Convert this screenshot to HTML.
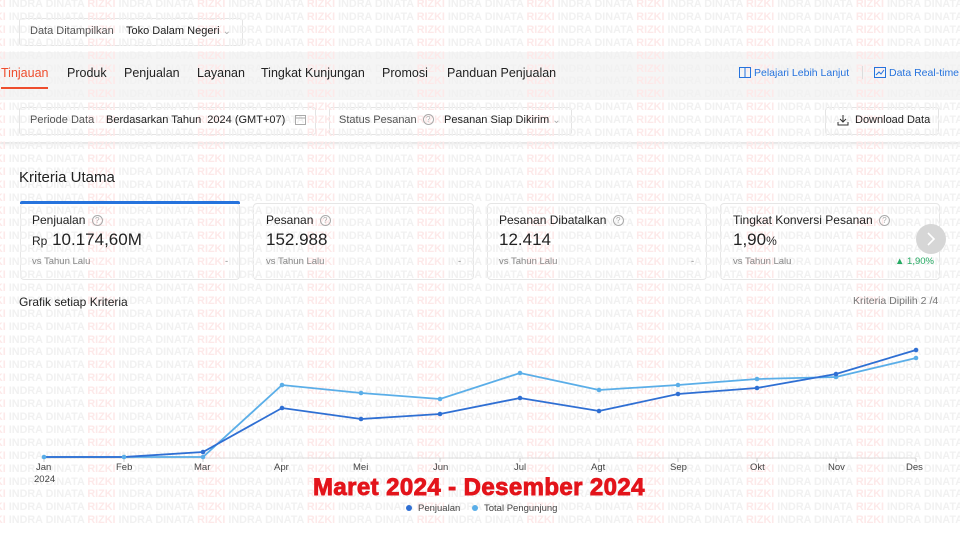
<!DOCTYPE html>
<html><head><meta charset="utf-8"><style>
*{margin:0;padding:0;box-sizing:border-box}
body{width:960px;height:533px;overflow:hidden;background:#fff;font-family:"Liberation Sans",sans-serif;position:relative;color:#222}
.band{position:absolute;left:0;top:52px;width:960px;height:92px;background:#f5f5f5}
.wmw{position:absolute;left:0;top:0;width:960px;height:533px;overflow:hidden;z-index:1;pointer-events:none}
.wm{position:absolute;left:-101px;top:-2px;width:1061px;overflow:hidden;font-weight:bold;font-size:10.8px;line-height:12.9px;color:#f1f1f1;white-space:nowrap}
.wm i{font-style:normal;color:#fde9e9}
.a{position:absolute;z-index:2}
.box{position:absolute;border:1px solid #e4e4e4;border-radius:3px;z-index:0}
.t{position:absolute;z-index:2;white-space:nowrap}
.g{color:#555}
.nav{font-size:12.5px;color:#222;top:66px}
.q{display:inline-block;width:11px;height:11px;border:1px solid #aaa;border-radius:50%;font-size:8px;line-height:9px;text-align:center;color:#aaa;vertical-align:1px;margin-left:3px}
.card{position:absolute;top:203px;height:77px;border:1px solid #e6e6e6;border-radius:4px;z-index:0}
.lbl{font-size:12px;color:#222}
.val{font-size:17px;color:#222}
.vs{font-size:9.5px;color:#888}
.m{font-size:9.5px;color:#444;top:462px}
</style></head><body>
<div class="band"></div>
<div style="position:absolute;left:0;top:100px;width:960px;height:42px;background:#fff;box-shadow:0 2px 4px rgba(0,0,0,.08)"></div>
<div class="wmw"><div class="wm">
<div>INDRA DINATA <i>RIZKI</i> INDRA DINATA <i>RIZKI</i> INDRA DINATA <i>RIZKI</i> INDRA DINATA <i>RIZKI</i> INDRA DINATA <i>RIZKI</i> INDRA DINATA <i>RIZKI</i> INDRA DINATA <i>RIZKI</i> INDRA DINATA <i>RIZKI</i> INDRA DINATA <i>RIZKI</i> INDRA DINATA <i>RIZKI</i></div>
<div>INDRA DINATA <i>RIZKI</i> INDRA DINATA <i>RIZKI</i> INDRA DINATA <i>RIZKI</i> INDRA DINATA <i>RIZKI</i> INDRA DINATA <i>RIZKI</i> INDRA DINATA <i>RIZKI</i> INDRA DINATA <i>RIZKI</i> INDRA DINATA <i>RIZKI</i> INDRA DINATA <i>RIZKI</i> INDRA DINATA <i>RIZKI</i></div>
<div>INDRA DINATA <i>RIZKI</i> INDRA DINATA <i>RIZKI</i> INDRA DINATA <i>RIZKI</i> INDRA DINATA <i>RIZKI</i> INDRA DINATA <i>RIZKI</i> INDRA DINATA <i>RIZKI</i> INDRA DINATA <i>RIZKI</i> INDRA DINATA <i>RIZKI</i> INDRA DINATA <i>RIZKI</i> INDRA DINATA <i>RIZKI</i></div>
<div>INDRA DINATA <i>RIZKI</i> INDRA DINATA <i>RIZKI</i> INDRA DINATA <i>RIZKI</i> INDRA DINATA <i>RIZKI</i> INDRA DINATA <i>RIZKI</i> INDRA DINATA <i>RIZKI</i> INDRA DINATA <i>RIZKI</i> INDRA DINATA <i>RIZKI</i> INDRA DINATA <i>RIZKI</i> INDRA DINATA <i>RIZKI</i></div>
<div>INDRA DINATA <i>RIZKI</i> INDRA DINATA <i>RIZKI</i> INDRA DINATA <i>RIZKI</i> INDRA DINATA <i>RIZKI</i> INDRA DINATA <i>RIZKI</i> INDRA DINATA <i>RIZKI</i> INDRA DINATA <i>RIZKI</i> INDRA DINATA <i>RIZKI</i> INDRA DINATA <i>RIZKI</i> INDRA DINATA <i>RIZKI</i></div>
<div>INDRA DINATA <i>RIZKI</i> INDRA DINATA <i>RIZKI</i> INDRA DINATA <i>RIZKI</i> INDRA DINATA <i>RIZKI</i> INDRA DINATA <i>RIZKI</i> INDRA DINATA <i>RIZKI</i> INDRA DINATA <i>RIZKI</i> INDRA DINATA <i>RIZKI</i> INDRA DINATA <i>RIZKI</i> INDRA DINATA <i>RIZKI</i></div>
<div>INDRA DINATA <i>RIZKI</i> INDRA DINATA <i>RIZKI</i> INDRA DINATA <i>RIZKI</i> INDRA DINATA <i>RIZKI</i> INDRA DINATA <i>RIZKI</i> INDRA DINATA <i>RIZKI</i> INDRA DINATA <i>RIZKI</i> INDRA DINATA <i>RIZKI</i> INDRA DINATA <i>RIZKI</i> INDRA DINATA <i>RIZKI</i></div>
<div>INDRA DINATA <i>RIZKI</i> INDRA DINATA <i>RIZKI</i> INDRA DINATA <i>RIZKI</i> INDRA DINATA <i>RIZKI</i> INDRA DINATA <i>RIZKI</i> INDRA DINATA <i>RIZKI</i> INDRA DINATA <i>RIZKI</i> INDRA DINATA <i>RIZKI</i> INDRA DINATA <i>RIZKI</i> INDRA DINATA <i>RIZKI</i></div>
<div>INDRA DINATA <i>RIZKI</i> INDRA DINATA <i>RIZKI</i> INDRA DINATA <i>RIZKI</i> INDRA DINATA <i>RIZKI</i> INDRA DINATA <i>RIZKI</i> INDRA DINATA <i>RIZKI</i> INDRA DINATA <i>RIZKI</i> INDRA DINATA <i>RIZKI</i> INDRA DINATA <i>RIZKI</i> INDRA DINATA <i>RIZKI</i></div>
<div>INDRA DINATA <i>RIZKI</i> INDRA DINATA <i>RIZKI</i> INDRA DINATA <i>RIZKI</i> INDRA DINATA <i>RIZKI</i> INDRA DINATA <i>RIZKI</i> INDRA DINATA <i>RIZKI</i> INDRA DINATA <i>RIZKI</i> INDRA DINATA <i>RIZKI</i> INDRA DINATA <i>RIZKI</i> INDRA DINATA <i>RIZKI</i></div>
<div>INDRA DINATA <i>RIZKI</i> INDRA DINATA <i>RIZKI</i> INDRA DINATA <i>RIZKI</i> INDRA DINATA <i>RIZKI</i> INDRA DINATA <i>RIZKI</i> INDRA DINATA <i>RIZKI</i> INDRA DINATA <i>RIZKI</i> INDRA DINATA <i>RIZKI</i> INDRA DINATA <i>RIZKI</i> INDRA DINATA <i>RIZKI</i></div>
<div>INDRA DINATA <i>RIZKI</i> INDRA DINATA <i>RIZKI</i> INDRA DINATA <i>RIZKI</i> INDRA DINATA <i>RIZKI</i> INDRA DINATA <i>RIZKI</i> INDRA DINATA <i>RIZKI</i> INDRA DINATA <i>RIZKI</i> INDRA DINATA <i>RIZKI</i> INDRA DINATA <i>RIZKI</i> INDRA DINATA <i>RIZKI</i></div>
<div>INDRA DINATA <i>RIZKI</i> INDRA DINATA <i>RIZKI</i> INDRA DINATA <i>RIZKI</i> INDRA DINATA <i>RIZKI</i> INDRA DINATA <i>RIZKI</i> INDRA DINATA <i>RIZKI</i> INDRA DINATA <i>RIZKI</i> INDRA DINATA <i>RIZKI</i> INDRA DINATA <i>RIZKI</i> INDRA DINATA <i>RIZKI</i></div>
<div>INDRA DINATA <i>RIZKI</i> INDRA DINATA <i>RIZKI</i> INDRA DINATA <i>RIZKI</i> INDRA DINATA <i>RIZKI</i> INDRA DINATA <i>RIZKI</i> INDRA DINATA <i>RIZKI</i> INDRA DINATA <i>RIZKI</i> INDRA DINATA <i>RIZKI</i> INDRA DINATA <i>RIZKI</i> INDRA DINATA <i>RIZKI</i></div>
<div>INDRA DINATA <i>RIZKI</i> INDRA DINATA <i>RIZKI</i> INDRA DINATA <i>RIZKI</i> INDRA DINATA <i>RIZKI</i> INDRA DINATA <i>RIZKI</i> INDRA DINATA <i>RIZKI</i> INDRA DINATA <i>RIZKI</i> INDRA DINATA <i>RIZKI</i> INDRA DINATA <i>RIZKI</i> INDRA DINATA <i>RIZKI</i></div>
<div>INDRA DINATA <i>RIZKI</i> INDRA DINATA <i>RIZKI</i> INDRA DINATA <i>RIZKI</i> INDRA DINATA <i>RIZKI</i> INDRA DINATA <i>RIZKI</i> INDRA DINATA <i>RIZKI</i> INDRA DINATA <i>RIZKI</i> INDRA DINATA <i>RIZKI</i> INDRA DINATA <i>RIZKI</i> INDRA DINATA <i>RIZKI</i></div>
<div>INDRA DINATA <i>RIZKI</i> INDRA DINATA <i>RIZKI</i> INDRA DINATA <i>RIZKI</i> INDRA DINATA <i>RIZKI</i> INDRA DINATA <i>RIZKI</i> INDRA DINATA <i>RIZKI</i> INDRA DINATA <i>RIZKI</i> INDRA DINATA <i>RIZKI</i> INDRA DINATA <i>RIZKI</i> INDRA DINATA <i>RIZKI</i></div>
<div>INDRA DINATA <i>RIZKI</i> INDRA DINATA <i>RIZKI</i> INDRA DINATA <i>RIZKI</i> INDRA DINATA <i>RIZKI</i> INDRA DINATA <i>RIZKI</i> INDRA DINATA <i>RIZKI</i> INDRA DINATA <i>RIZKI</i> INDRA DINATA <i>RIZKI</i> INDRA DINATA <i>RIZKI</i> INDRA DINATA <i>RIZKI</i></div>
<div>INDRA DINATA <i>RIZKI</i> INDRA DINATA <i>RIZKI</i> INDRA DINATA <i>RIZKI</i> INDRA DINATA <i>RIZKI</i> INDRA DINATA <i>RIZKI</i> INDRA DINATA <i>RIZKI</i> INDRA DINATA <i>RIZKI</i> INDRA DINATA <i>RIZKI</i> INDRA DINATA <i>RIZKI</i> INDRA DINATA <i>RIZKI</i></div>
<div>INDRA DINATA <i>RIZKI</i> INDRA DINATA <i>RIZKI</i> INDRA DINATA <i>RIZKI</i> INDRA DINATA <i>RIZKI</i> INDRA DINATA <i>RIZKI</i> INDRA DINATA <i>RIZKI</i> INDRA DINATA <i>RIZKI</i> INDRA DINATA <i>RIZKI</i> INDRA DINATA <i>RIZKI</i> INDRA DINATA <i>RIZKI</i></div>
<div>INDRA DINATA <i>RIZKI</i> INDRA DINATA <i>RIZKI</i> INDRA DINATA <i>RIZKI</i> INDRA DINATA <i>RIZKI</i> INDRA DINATA <i>RIZKI</i> INDRA DINATA <i>RIZKI</i> INDRA DINATA <i>RIZKI</i> INDRA DINATA <i>RIZKI</i> INDRA DINATA <i>RIZKI</i> INDRA DINATA <i>RIZKI</i></div>
<div>INDRA DINATA <i>RIZKI</i> INDRA DINATA <i>RIZKI</i> INDRA DINATA <i>RIZKI</i> INDRA DINATA <i>RIZKI</i> INDRA DINATA <i>RIZKI</i> INDRA DINATA <i>RIZKI</i> INDRA DINATA <i>RIZKI</i> INDRA DINATA <i>RIZKI</i> INDRA DINATA <i>RIZKI</i> INDRA DINATA <i>RIZKI</i></div>
<div>INDRA DINATA <i>RIZKI</i> INDRA DINATA <i>RIZKI</i> INDRA DINATA <i>RIZKI</i> INDRA DINATA <i>RIZKI</i> INDRA DINATA <i>RIZKI</i> INDRA DINATA <i>RIZKI</i> INDRA DINATA <i>RIZKI</i> INDRA DINATA <i>RIZKI</i> INDRA DINATA <i>RIZKI</i> INDRA DINATA <i>RIZKI</i></div>
<div>INDRA DINATA <i>RIZKI</i> INDRA DINATA <i>RIZKI</i> INDRA DINATA <i>RIZKI</i> INDRA DINATA <i>RIZKI</i> INDRA DINATA <i>RIZKI</i> INDRA DINATA <i>RIZKI</i> INDRA DINATA <i>RIZKI</i> INDRA DINATA <i>RIZKI</i> INDRA DINATA <i>RIZKI</i> INDRA DINATA <i>RIZKI</i></div>
<div>INDRA DINATA <i>RIZKI</i> INDRA DINATA <i>RIZKI</i> INDRA DINATA <i>RIZKI</i> INDRA DINATA <i>RIZKI</i> INDRA DINATA <i>RIZKI</i> INDRA DINATA <i>RIZKI</i> INDRA DINATA <i>RIZKI</i> INDRA DINATA <i>RIZKI</i> INDRA DINATA <i>RIZKI</i> INDRA DINATA <i>RIZKI</i></div>
<div>INDRA DINATA <i>RIZKI</i> INDRA DINATA <i>RIZKI</i> INDRA DINATA <i>RIZKI</i> INDRA DINATA <i>RIZKI</i> INDRA DINATA <i>RIZKI</i> INDRA DINATA <i>RIZKI</i> INDRA DINATA <i>RIZKI</i> INDRA DINATA <i>RIZKI</i> INDRA DINATA <i>RIZKI</i> INDRA DINATA <i>RIZKI</i></div>
<div>INDRA DINATA <i>RIZKI</i> INDRA DINATA <i>RIZKI</i> INDRA DINATA <i>RIZKI</i> INDRA DINATA <i>RIZKI</i> INDRA DINATA <i>RIZKI</i> INDRA DINATA <i>RIZKI</i> INDRA DINATA <i>RIZKI</i> INDRA DINATA <i>RIZKI</i> INDRA DINATA <i>RIZKI</i> INDRA DINATA <i>RIZKI</i></div>
<div>INDRA DINATA <i>RIZKI</i> INDRA DINATA <i>RIZKI</i> INDRA DINATA <i>RIZKI</i> INDRA DINATA <i>RIZKI</i> INDRA DINATA <i>RIZKI</i> INDRA DINATA <i>RIZKI</i> INDRA DINATA <i>RIZKI</i> INDRA DINATA <i>RIZKI</i> INDRA DINATA <i>RIZKI</i> INDRA DINATA <i>RIZKI</i></div>
<div>INDRA DINATA <i>RIZKI</i> INDRA DINATA <i>RIZKI</i> INDRA DINATA <i>RIZKI</i> INDRA DINATA <i>RIZKI</i> INDRA DINATA <i>RIZKI</i> INDRA DINATA <i>RIZKI</i> INDRA DINATA <i>RIZKI</i> INDRA DINATA <i>RIZKI</i> INDRA DINATA <i>RIZKI</i> INDRA DINATA <i>RIZKI</i></div>
<div>INDRA DINATA <i>RIZKI</i> INDRA DINATA <i>RIZKI</i> INDRA DINATA <i>RIZKI</i> INDRA DINATA <i>RIZKI</i> INDRA DINATA <i>RIZKI</i> INDRA DINATA <i>RIZKI</i> INDRA DINATA <i>RIZKI</i> INDRA DINATA <i>RIZKI</i> INDRA DINATA <i>RIZKI</i> INDRA DINATA <i>RIZKI</i></div>
<div>INDRA DINATA <i>RIZKI</i> INDRA DINATA <i>RIZKI</i> INDRA DINATA <i>RIZKI</i> INDRA DINATA <i>RIZKI</i> INDRA DINATA <i>RIZKI</i> INDRA DINATA <i>RIZKI</i> INDRA DINATA <i>RIZKI</i> INDRA DINATA <i>RIZKI</i> INDRA DINATA <i>RIZKI</i> INDRA DINATA <i>RIZKI</i></div>
<div>INDRA DINATA <i>RIZKI</i> INDRA DINATA <i>RIZKI</i> INDRA DINATA <i>RIZKI</i> INDRA DINATA <i>RIZKI</i> INDRA DINATA <i>RIZKI</i> INDRA DINATA <i>RIZKI</i> INDRA DINATA <i>RIZKI</i> INDRA DINATA <i>RIZKI</i> INDRA DINATA <i>RIZKI</i> INDRA DINATA <i>RIZKI</i></div>
<div>INDRA DINATA <i>RIZKI</i> INDRA DINATA <i>RIZKI</i> INDRA DINATA <i>RIZKI</i> INDRA DINATA <i>RIZKI</i> INDRA DINATA <i>RIZKI</i> INDRA DINATA <i>RIZKI</i> INDRA DINATA <i>RIZKI</i> INDRA DINATA <i>RIZKI</i> INDRA DINATA <i>RIZKI</i> INDRA DINATA <i>RIZKI</i></div>
<div>INDRA DINATA <i>RIZKI</i> INDRA DINATA <i>RIZKI</i> INDRA DINATA <i>RIZKI</i> INDRA DINATA <i>RIZKI</i> INDRA DINATA <i>RIZKI</i> INDRA DINATA <i>RIZKI</i> INDRA DINATA <i>RIZKI</i> INDRA DINATA <i>RIZKI</i> INDRA DINATA <i>RIZKI</i> INDRA DINATA <i>RIZKI</i></div>
<div>INDRA DINATA <i>RIZKI</i> INDRA DINATA <i>RIZKI</i> INDRA DINATA <i>RIZKI</i> INDRA DINATA <i>RIZKI</i> INDRA DINATA <i>RIZKI</i> INDRA DINATA <i>RIZKI</i> INDRA DINATA <i>RIZKI</i> INDRA DINATA <i>RIZKI</i> INDRA DINATA <i>RIZKI</i> INDRA DINATA <i>RIZKI</i></div>
<div>INDRA DINATA <i>RIZKI</i> INDRA DINATA <i>RIZKI</i> INDRA DINATA <i>RIZKI</i> INDRA DINATA <i>RIZKI</i> INDRA DINATA <i>RIZKI</i> INDRA DINATA <i>RIZKI</i> INDRA DINATA <i>RIZKI</i> INDRA DINATA <i>RIZKI</i> INDRA DINATA <i>RIZKI</i> INDRA DINATA <i>RIZKI</i></div>
<div>INDRA DINATA <i>RIZKI</i> INDRA DINATA <i>RIZKI</i> INDRA DINATA <i>RIZKI</i> INDRA DINATA <i>RIZKI</i> INDRA DINATA <i>RIZKI</i> INDRA DINATA <i>RIZKI</i> INDRA DINATA <i>RIZKI</i> INDRA DINATA <i>RIZKI</i> INDRA DINATA <i>RIZKI</i> INDRA DINATA <i>RIZKI</i></div>
<div>INDRA DINATA <i>RIZKI</i> INDRA DINATA <i>RIZKI</i> INDRA DINATA <i>RIZKI</i> INDRA DINATA <i>RIZKI</i> INDRA DINATA <i>RIZKI</i> INDRA DINATA <i>RIZKI</i> INDRA DINATA <i>RIZKI</i> INDRA DINATA <i>RIZKI</i> INDRA DINATA <i>RIZKI</i> INDRA DINATA <i>RIZKI</i></div>
<div>INDRA DINATA <i>RIZKI</i> INDRA DINATA <i>RIZKI</i> INDRA DINATA <i>RIZKI</i> INDRA DINATA <i>RIZKI</i> INDRA DINATA <i>RIZKI</i> INDRA DINATA <i>RIZKI</i> INDRA DINATA <i>RIZKI</i> INDRA DINATA <i>RIZKI</i> INDRA DINATA <i>RIZKI</i> INDRA DINATA <i>RIZKI</i></div>
<div>INDRA DINATA <i>RIZKI</i> INDRA DINATA <i>RIZKI</i> INDRA DINATA <i>RIZKI</i> INDRA DINATA <i>RIZKI</i> INDRA DINATA <i>RIZKI</i> INDRA DINATA <i>RIZKI</i> INDRA DINATA <i>RIZKI</i> INDRA DINATA <i>RIZKI</i> INDRA DINATA <i>RIZKI</i> INDRA DINATA <i>RIZKI</i></div>
<div>INDRA DINATA <i>RIZKI</i> INDRA DINATA <i>RIZKI</i> INDRA DINATA <i>RIZKI</i> INDRA DINATA <i>RIZKI</i> INDRA DINATA <i>RIZKI</i> INDRA DINATA <i>RIZKI</i> INDRA DINATA <i>RIZKI</i> INDRA DINATA <i>RIZKI</i> INDRA DINATA <i>RIZKI</i> INDRA DINATA <i>RIZKI</i></div>
</div></div>

<!-- top selector -->
<div class="box" style="left:19px;top:18px;width:224px;height:28px"></div>
<div class="t g" style="left:30px;top:25px;font-size:11px">Data Ditampilkan</div>
<div class="t" style="left:126px;top:25px;font-size:11px">Toko Dalam Negeri <span style="color:#aaa;font-size:10px">&#8964;</span></div>

<!-- nav -->
<div class="t nav" style="left:1px;color:#ee4d2d">Tinjauan</div>
<div class="a" style="left:1px;top:87px;width:47px;height:2px;background:#ee4d2d"></div>
<div class="t nav" style="left:67px">Produk</div>
<div class="t nav" style="left:124px">Penjualan</div>
<div class="t nav" style="left:197px">Layanan</div>
<div class="t nav" style="left:261px">Tingkat Kunjungan</div>
<div class="t nav" style="left:382px">Promosi</div>
<div class="t nav" style="left:447px">Panduan Penjualan</div>
<svg class="a" style="left:739px;top:67px" width="12" height="11" viewBox="0 0 12 11"><rect x="0.5" y="0.5" width="11" height="10" fill="none" stroke="#2673dd"/><line x1="6" y1="0.5" x2="6" y2="10.5" stroke="#2673dd"/></svg>
<div class="t" style="left:754px;top:67px;font-size:10.5px;color:#2673dd">Pelajari Lebih Lanjut</div>
<div class="a" style="left:862px;top:66px;width:1px;height:13px;background:#ddd"></div>
<svg class="a" style="left:874px;top:67px" width="12" height="11" viewBox="0 0 12 11"><rect x="0.5" y="0.5" width="11" height="10" fill="none" stroke="#2673dd"/><polyline points="2,8 5,5 7,7 10,3" fill="none" stroke="#2673dd"/></svg>
<div class="t" style="left:889px;top:67px;font-size:10.5px;color:#2673dd">Data Real-time</div>

<!-- filter bar -->
<div class="box" style="left:19px;top:107px;width:297px;height:28px"></div>
<div class="t g" style="left:30px;top:114px;font-size:11px">Periode Data</div>
<div class="t" style="left:106px;top:114px;font-size:11px">Berdasarkan Tahun&nbsp; 2024 (GMT+07)</div>
<svg class="a" style="left:295px;top:114px" width="11" height="11" viewBox="0 0 11 11"><rect x="0.5" y="1.5" width="10" height="9" fill="none" stroke="#aaa"/><line x1="0.5" y1="4" x2="10.5" y2="4" stroke="#aaa"/></svg>
<div class="box" style="left:329px;top:107px;width:243px;height:28px"></div>
<div class="t g" style="left:339px;top:114px;font-size:11px">Status Pesanan <span class="q">?</span></div>
<div class="t" style="left:444px;top:114px;font-size:11px">Pesanan Siap Dikirim <span style="color:#aaa;font-size:10px">&#8964;</span></div>
<div class="box" style="left:825px;top:107px;width:114px;height:28px"></div>
<svg class="a" style="left:837px;top:114px" width="12" height="12" viewBox="0 0 12 12"><path d="M6 1v7M3 5l3 3 3-3M1 8v3h10V8" fill="none" stroke="#333"/></svg>
<div class="t" style="left:855px;top:114px;font-size:11px">Download Data</div>

<!-- Kriteria Utama -->
<div class="t" style="left:19px;top:169px;font-size:15px">Kriteria Utama</div>
<div class="card" style="left:20px;width:220px"></div>
<div class="a" style="left:20px;top:201px;width:220px;height:3px;background:#2673dd;border-radius:2px 2px 0 0"></div>
<div class="card" style="left:253px;width:221px"></div>
<div class="card" style="left:487px;width:220px"></div>
<div class="card" style="left:720px;width:220px"></div>

<div class="t lbl" style="left:32px;top:213px">Penjualan <span class="q">?</span></div>
<div class="t val" style="left:32px;top:230px"><span style="font-size:12px">Rp</span> 10.174,60M</div>
<div class="t vs" style="left:32px;top:256px">vs Tahun Lalu</div>
<div class="t vs" style="left:225px;top:256px">-</div>

<div class="t lbl" style="left:266px;top:213px">Pesanan <span class="q">?</span></div>
<div class="t val" style="left:266px;top:230px">152.988</div>
<div class="t vs" style="left:266px;top:256px">vs Tahun Lalu</div>
<div class="t vs" style="left:458px;top:256px">-</div>

<div class="t lbl" style="left:499px;top:213px">Pesanan Dibatalkan <span class="q">?</span></div>
<div class="t val" style="left:499px;top:230px">12.414</div>
<div class="t vs" style="left:499px;top:256px">vs Tahun Lalu</div>
<div class="t vs" style="left:691px;top:256px">-</div>

<div class="t lbl" style="left:733px;top:213px">Tingkat Konversi Pesanan <span class="q">?</span></div>
<div class="t val" style="left:733px;top:230px">1,90<span style="font-size:12px">%</span></div>
<div class="t vs" style="left:733px;top:256px">vs Tahun Lalu</div>
<div class="t vs" style="left:895px;top:256px;color:#26aa63">&#9650; 1,90%</div>
<div class="a" style="left:916px;top:224px;width:30px;height:30px;border-radius:50%;background:#d6d6d6"></div>
<svg class="a" style="left:925px;top:231px" width="12" height="16" viewBox="0 0 12 16"><path d="M3 2l6 6-6 6" fill="none" stroke="#fff" stroke-width="1.6"/></svg>

<div class="t" style="left:19px;top:295px;font-size:12px">Grafik setiap Kriteria</div>
<div class="t" style="left:853px;top:295px;font-size:10.5px;color:#777">Kriteria Dipilih 2 /4</div>

<!-- chart -->
<svg class="a" style="left:0;top:0" width="960" height="533">
<line x1="44" y1="458" x2="916" y2="458" stroke="#ddd" stroke-width="1"/>
<g stroke="#ccc"><line x1="44" y1="458" x2="44" y2="462"/><line x1="124" y1="458" x2="124" y2="462"/><line x1="203" y1="458" x2="203" y2="462"/><line x1="282" y1="458" x2="282" y2="462"/><line x1="361" y1="458" x2="361" y2="462"/><line x1="440" y1="458" x2="440" y2="462"/><line x1="520" y1="458" x2="520" y2="462"/><line x1="599" y1="458" x2="599" y2="462"/><line x1="678" y1="458" x2="678" y2="462"/><line x1="757" y1="458" x2="757" y2="462"/><line x1="836" y1="458" x2="836" y2="462"/><line x1="916" y1="458" x2="916" y2="462"/></g>
<polyline fill="none" stroke="#5aaee8" stroke-width="1.8" points="44,457 124,457 203,457 282,385 361,393 440,399 520,373 599,390 678,385 757,379 836,377 916,358"/>
<polyline fill="none" stroke="#2f6fd3" stroke-width="1.8" points="44,457 124,457 203,452 282,408 361,419 440,414 520,398 599,411 678,394 757,388 836,374 916,350"/>
<g fill="#5aaee8"><circle cx="44" cy="457" r="2.3"/><circle cx="124" cy="457" r="2.3"/><circle cx="203" cy="457" r="2.3"/><circle cx="282" cy="385" r="2.3"/><circle cx="361" cy="393" r="2.3"/><circle cx="440" cy="399" r="2.3"/><circle cx="520" cy="373" r="2.3"/><circle cx="599" cy="390" r="2.3"/><circle cx="678" cy="385" r="2.3"/><circle cx="757" cy="379" r="2.3"/><circle cx="836" cy="377" r="2.3"/><circle cx="916" cy="358" r="2.3"/></g>
<g fill="#2f6fd3"><circle cx="203" cy="452" r="2.3"/><circle cx="282" cy="408" r="2.3"/><circle cx="361" cy="419" r="2.3"/><circle cx="440" cy="414" r="2.3"/><circle cx="520" cy="398" r="2.3"/><circle cx="599" cy="411" r="2.3"/><circle cx="678" cy="394" r="2.3"/><circle cx="757" cy="388" r="2.3"/><circle cx="836" cy="374" r="2.3"/><circle cx="916" cy="350" r="2.3"/></g>
<circle cx="409" cy="508" r="3" fill="#2f6fd3"/>
<circle cx="475" cy="508" r="3" fill="#5aaee8"/>
</svg>
<div class="t m" style="left:36px">Jan</div>
<div class="t m" style="left:34px;top:474px">2024</div>
<div class="t m" style="left:116px">Feb</div>
<div class="t m" style="left:194px">Mar</div>
<div class="t m" style="left:274px">Apr</div>
<div class="t m" style="left:353px">Mei</div>
<div class="t m" style="left:433px">Jun</div>
<div class="t m" style="left:514px">Jul</div>
<div class="t m" style="left:591px">Agt</div>
<div class="t m" style="left:670px">Sep</div>
<div class="t m" style="left:750px">Okt</div>
<div class="t m" style="left:828px">Nov</div>
<div class="t m" style="left:906px">Des</div>
<div class="t" style="left:313px;top:474px;font-size:24px;font-weight:bold;color:#e3141b;letter-spacing:0.4px;-webkit-text-stroke:0.9px #e3141b">Maret 2024 - Desember 2024</div>
<div class="t" style="left:418px;top:503px;font-size:9.5px;color:#444">Penjualan</div>
<div class="t" style="left:484px;top:503px;font-size:9.5px;color:#444">Total Pengunjung</div>
</body></html>
